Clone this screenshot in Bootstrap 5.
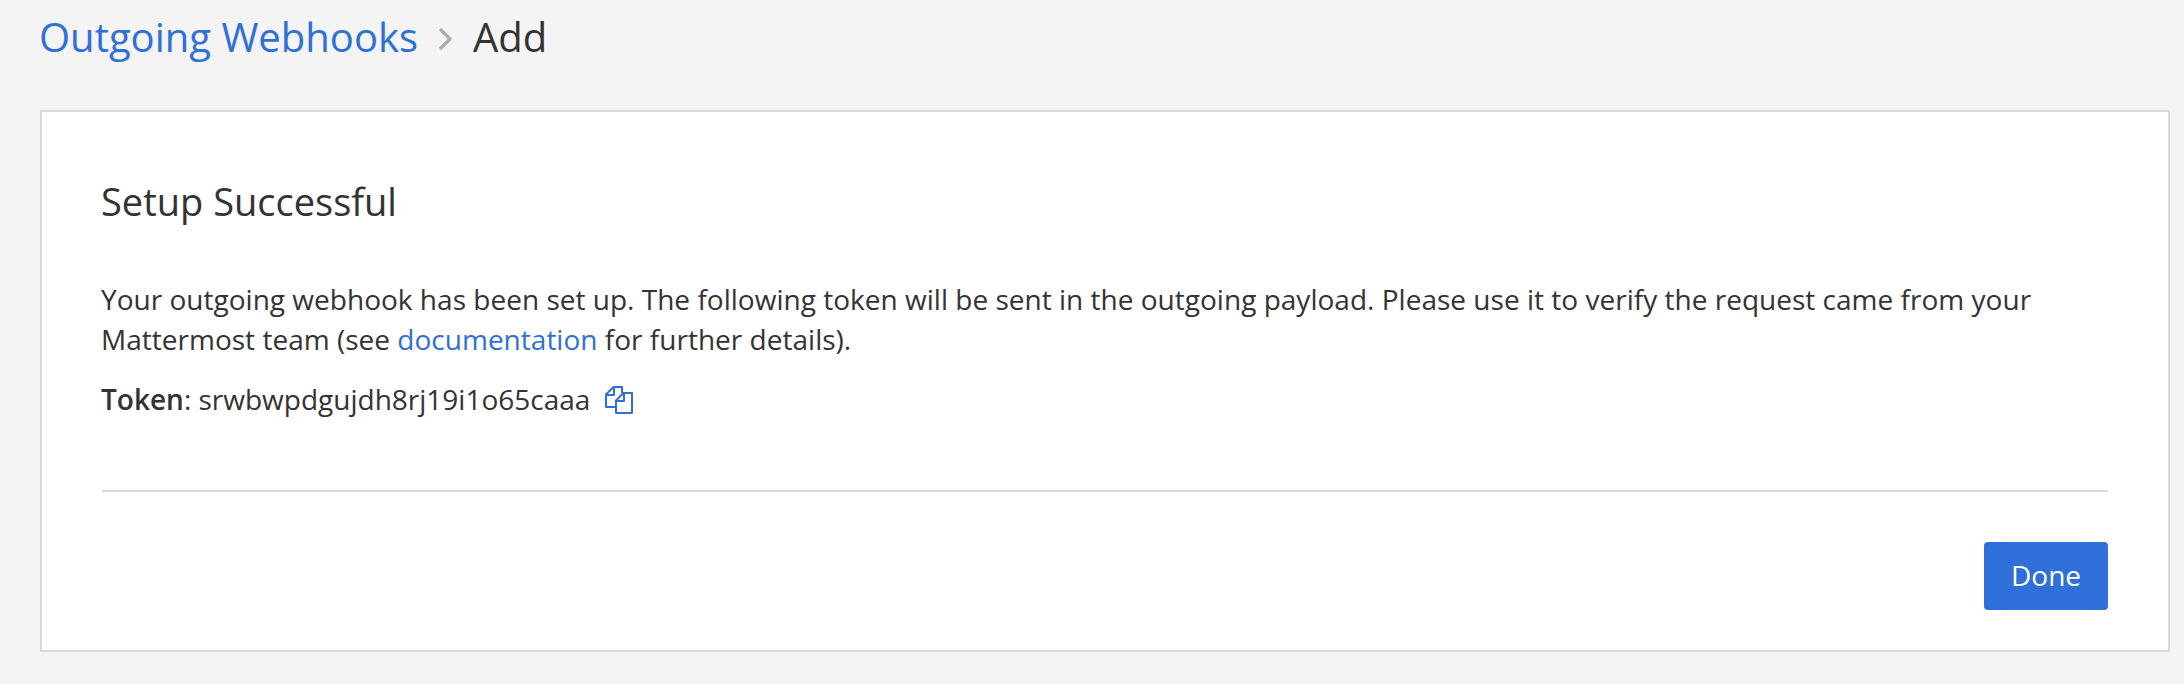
<!DOCTYPE html>
<html lang="en">
<head>
<meta charset="utf-8">
<title>Outgoing Webhooks</title>
<link href="https://cdn.jsdelivr.net/npm/bootstrap@5.3.0/dist/css/bootstrap.min.css" rel="stylesheet">
<style>
body{background:#f4f4f4;color:#333;font:28px/40px "Open Sans",sans-serif;height:684px;overflow:hidden}
a{color:#2f6fd9}
.crumbs{font-size:40px;line-height:56px;padding:9px 39px 0;height:110px}
.chevron{width:14px;height:24px;margin:18px 21px 0 20px}
.panel{margin:0 14px 0 40px;height:542px;border:2px solid #d9d9d9;padding:59px 60px 0}
.copy-block{margin-left:-1px;margin-right:-1px}
h1{font-size:38px;line-height:60px;font-weight:400;margin:0 0 48px}
.intro{margin-bottom:20px;letter-spacing:.015px}
.copy-link{margin:2px 0 0 15px}
.rule{border-top:2px solid #d9d9d9;margin-top:71px}
.btn-done{background:#2f6fd9;color:#fff;font-size:28px;line-height:40px;width:124px;padding:13px 0 15px;border:0;border-radius:4px;margin-top:50px}
.btn-done:hover{background:#2860bd;color:#fff}
</style>
<script src="https://cdn.jsdelivr.net/npm/bootstrap@5.3.0/dist/js/bootstrap.bundle.min.js"></script>
</head>
<body>
<nav class="crumbs d-flex align-items-start"><a href="#" class="text-decoration-none">Outgoing Webhooks</a><svg class="chevron" viewBox="0 0 14 24" fill="none" stroke="#acacac" stroke-width="3.2" stroke-linejoin="round" aria-hidden="true"><path d="M2 2L12 12L2 22"/></svg><span>Add</span></nav>
<main class="panel bg-white">
<div class="copy-block">
<h1>Setup Successful</h1>
<p class="intro">Your outgoing webhook has been set up. The following token will be sent in the outgoing payload. Please use it to verify the request came from your Mattermost team (see <a href="#" class="text-decoration-none">documentation</a> for further details).</p>
<div class="d-flex align-items-center"><p class="mb-0"><span class="fw-semibold">Token</span>: srwbwpdgujdh8rj19i1o65caaa</p><a href="#" class="copy-link d-flex" aria-label="Copy"><svg width="28" height="28" viewBox="0 0 28 28" fill="none" stroke="currentColor" stroke-width="2" stroke-linejoin="round" aria-hidden="true"><path d="M11 21H1V8.5L8.5 1H17V7M9 1V9H1M11 14.5L18.500 7H27V27H11ZM19 7V15H11"/></svg></a></div>
</div>
<div class="rule d-flex justify-content-end"><button class="btn btn-done">Done</button></div>
</main>
</body>
</html>
